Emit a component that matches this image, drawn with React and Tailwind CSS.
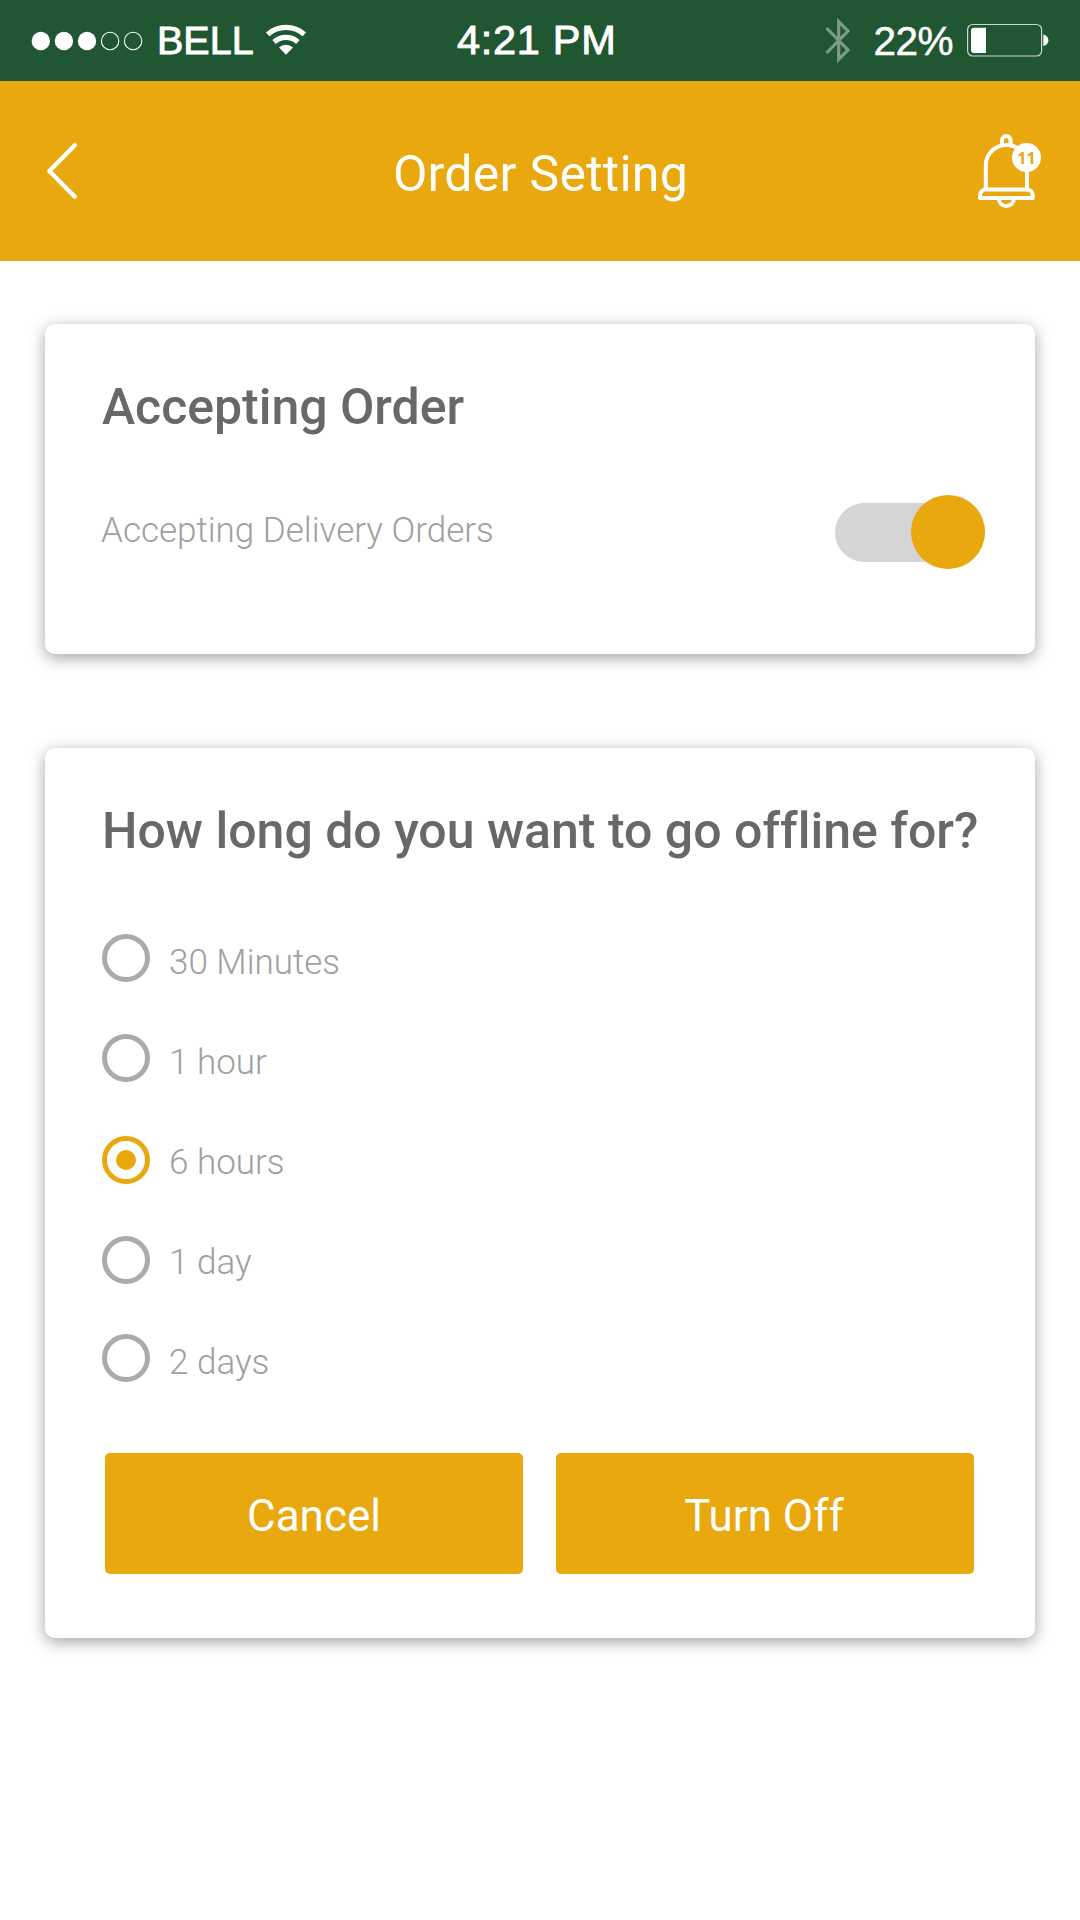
const OPTIONS = [
  { label: '30 Minutes', offset: 'mt-0' },
  { label: '1 hour', offset: 'mt-0' },
  { label: '6 hours', offset: 'mt-[2px]', selected: true },
  { label: '1 day', offset: 'mt-[2px]' },
  { label: '2 days', offset: 'mt-0' },
];

function StatusBar() {
  return (
    <div className="flex h-[81px] items-center bg-[#205632] font-['Liberation_Sans',Arial,sans-serif] text-white">
      <div className="flex w-[457px] items-center pl-[31px]">
        <svg className="h-[20px] w-[112px]" viewBox="31 30 112 20" fill="#fff">
          <circle cx="40.8" cy="40" r="9.2" />
          <circle cx="63.9" cy="40" r="9.2" />
          <circle cx="87" cy="40" r="9.2" />
          <circle cx="110.1" cy="40" r="8.7" fill="none" stroke="#fff" strokeWidth="1.1" />
          <circle cx="133.1" cy="40" r="8.7" fill="none" stroke="#fff" strokeWidth="1.1" />
        </svg>
        <span className="ml-[14px] pb-[2px] text-[39.5px] leading-[40px] [-webkit-text-stroke:0.9px_#fff]">BELL</span>
        <svg className="ml-[11px] h-[32px] w-[42px] -translate-y-[2px]" viewBox="264 23 42 32" fill="none" stroke="#fff">
          <path d="M266.7 34.4A27.6 27.6 0 0 1 303.3 34.4" strokeWidth="5.2" />
          <path d="M273.1 42A17.6 17.6 0 0 1 296.9 42" strokeWidth="5.2" />
          <path d="M285 54.8L278 47.5A10.4 10.4 0 0 1 292 47.5Z" fill="#fff" stroke="none" />
        </svg>
      </div>
      <span className="whitespace-nowrap pb-px text-[41.5px] leading-[40px] tracking-[0.7px] [-webkit-text-stroke:0.9px_#fff]">4:21 PM</span>
      <div className="ml-auto flex items-center pr-[31px]">
        <svg className="h-[47px] w-[26px]" viewBox="825 17 26 47" fill="none" stroke="#7d9c88" strokeWidth="3.2">
          <path d="M826.5 28L848 50L838.7 59.3V21.7L848 31L826.5 53" />
        </svg>
        <span className="ml-[22px] text-[40.5px] leading-[40px] tracking-[-0.5px] [-webkit-text-stroke:0.5px_#fff]">22%</span>
        <svg className="ml-[13px] h-[34px] w-[83px] -translate-y-px" viewBox="966 23 83 34">
          <rect x="967.6" y="24.5" width="74" height="31.5" rx="5" fill="none" stroke="#c9d6cd" strokeWidth="1.2" />
          <path d="M986 27.7H974A3 3 0 0 0 971 30.7V50A3 3 0 0 0 974 53H986Z" fill="#fff" />
          <path d="M1043.3 34.5C1046.6 35.2 1048.4 37.6 1048.4 40.3S1046.6 45.4 1043.3 46Z" fill="#fff" />
        </svg>
      </div>
    </div>
  );
}

function Header() {
  return (
    <header className="flex h-[180px] items-center justify-between bg-[#e8a80e] px-[38px] text-white">
      <button className="w-[66px]" aria-label="Back">
        <svg className="ml-[6px] h-[60px] w-[36px]" viewBox="44 141 36 60" fill="none" stroke="#fff" strokeWidth="4.4" strokeLinecap="round" strokeLinejoin="round">
          <path d="M74.8 145.2L49.3 171L74.8 196.8" />
        </svg>
      </button>
      <h1 className="pl-px pt-[6px] text-[50px] leading-[60px] tracking-[0.26px]">Order Setting</h1>
      <button className="relative h-[80px] w-[66px]" aria-label="Notifications">
        <svg className="h-[80px] w-[66px]" viewBox="976 131 66 80" fill="none" stroke="#fff" strokeWidth="4">
          <path d="M1002 144.5V140.4A4.3 4.3 0 0 1 1010.6 140.4V144.5" />
          <path d="M985.8 189V165.5A20.6 20.6 0 0 1 1027 165.5V189" />
          <path d="M980 198.1V195.5A6 6 0 0 1 986 189.5H1026.8A6 6 0 0 1 1032.8 195.5V198.1Z" strokeLinejoin="round" />
          <path d="M998.7 198.5A7.6 7.6 0 0 0 1013.9 198.5" />
        </svg>
        <span className="absolute left-[36px] top-[12px] flex h-[29px] w-[29px] items-center justify-center rounded-full bg-white pt-px font-['Noto_Sans',sans-serif] text-[16px] font-bold leading-none text-[#e8a80e]">11</span>
      </button>
    </header>
  );
}

function Card({ className, children }) {
  return (
    <section className={`mx-[45px] rounded-[10px] bg-white pt-[53px] shadow-[0_4px_16px_rgba(0,0,0,0.36)] ${className}`}>
      {children}
    </section>
  );
}

function Radio({ selected, offset }) {
  return (
    <span
      className={`flex h-[48px] w-[48px] shrink-0 items-center justify-center rounded-full border-[5px] ${offset} ${selected ? 'border-[#e8a80e]' : 'border-[#ababab]'}`}
    >
      {selected && <span className="h-[20px] w-[20px] rounded-full bg-[#e8a80e]" />}
    </span>
  );
}

export default function App() {
  return (
    <main className="min-h-[1920px] w-[1080px] bg-white font-['Roboto',sans-serif]">
      <StatusBar />
      <Header />

      <Card className="mt-[63px] h-[330px]">
        <h2 className="pl-[57px] text-[50px] font-medium leading-[60px] tracking-[-0.03px] text-[#686868]">Accepting Order</h2>
        <div className="mt-[58px] flex h-[74px] items-center justify-between pl-[56px] pr-[50px]">
          <span className="pb-[2px] text-[35px] font-light leading-[40px] text-[#a0a0a0]">Accepting Delivery Orders</span>
          <span className="relative h-[59px] w-[150px] rounded-full bg-[#d5d5d5]">
            <span className="absolute -top-[8px] right-0 h-[74px] w-[74px] rounded-full bg-[#e8a80e]" />
          </span>
        </div>
      </Card>

      <Card className="mt-[94px] h-[890px]">
        <h2 className="whitespace-nowrap pl-[57px] text-[50px] font-medium leading-[60px] tracking-[0.01px] text-[#686868]">
          How long do you want to go offline for?
        </h2>
        <ul className="mt-[73px] pl-[57px]">
          {OPTIONS.map((option) => (
            <li key={option.label} className="flex h-[100px] items-start">
              <Radio selected={option.selected} offset={option.offset} />
              <span className="ml-[19px] mt-[9px] text-[35px] font-light leading-[40px] text-[#a0a0a0]">{option.label}</span>
            </li>
          ))}
        </ul>
        <div className="mt-[19px] flex gap-[33px] pl-[60px]">
          <button className="h-[121px] w-[418px] rounded-[5px] bg-[#e8a80e] pt-[4px] text-[44px] text-white">Cancel</button>
          <button className="h-[121px] w-[418px] rounded-[5px] bg-[#e8a80e] pt-[4px] pr-[2px] text-[44px] text-white">Turn Off</button>
        </div>
      </Card>
    </main>
  );
}
